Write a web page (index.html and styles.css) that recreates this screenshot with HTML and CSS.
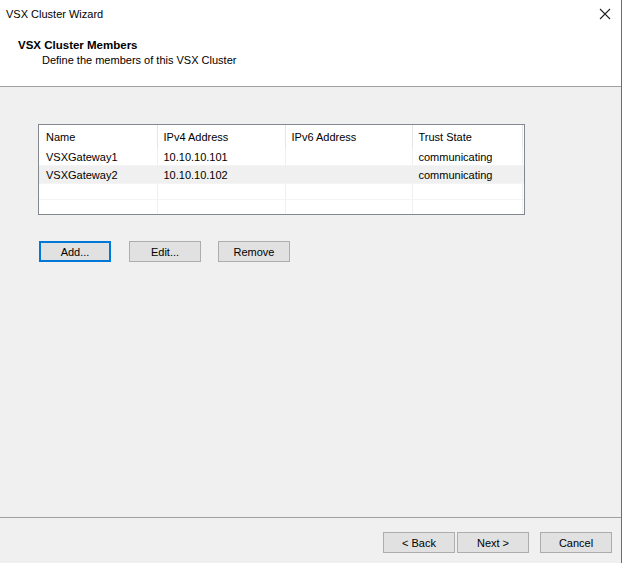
FILE: index.html
```html
<!DOCTYPE html>
<html lang="en">
<head>
    <meta charset="UTF-8">
    <title>VSX Cluster Wizard</title>
    <link rel="stylesheet" href="styles.css">
</head>
<body>
    <div class="window">
        <div class="titlebar">
            <span>VSX Cluster Wizard</span>
            <svg class="close" width="12" height="12" viewBox="0 0 12 12">
                <path d="M1 1 L11 11 M11 1 L1 11" stroke="#222" stroke-width="1.1" fill="none"/>
            </svg>
        </div>

        <div class="header">
            <h1>VSX Cluster Members</h1>
            <p>Define the members of this VSX Cluster</p>
        </div>

        <div class="content">
            <div class="list">
                <table>
                    <colgroup>
                        <col style="width: 118px">
                        <col style="width: 128px">
                        <col style="width: 127px">
                        <col style="width: 110px">
                        <col>
                    </colgroup>
                    <thead>
                        <tr>
                            <th>Name</th>
                            <th>IPv4 Address</th>
                            <th>IPv6 Address</th>
                            <th>Trust State</th>
                            <th></th>
                        </tr>
                    </thead>
                    <tbody>
                        <tr>
                            <td>VSXGateway1</td>
                            <td>10.10.10.101</td>
                            <td></td>
                            <td>communicating</td>
                            <td></td>
                        </tr>
                        <tr class="alt">
                            <td>VSXGateway2</td>
                            <td>10.10.10.102</td>
                            <td></td>
                            <td>communicating</td>
                            <td></td>
                        </tr>
                        <tr class="empty">
                            <td></td><td></td><td></td><td></td><td></td>
                        </tr>
                        <tr class="empty">
                            <td></td><td></td><td></td><td></td><td></td>
                        </tr>
                    </tbody>
                </table>
            </div>

            <div class="actions">
                <button class="btn default">Add...</button>
                <button class="btn">Edit...</button>
                <button class="btn">Remove</button>
            </div>
        </div>

        <div class="footer">
            <button class="btn">&lt; Back</button>
            <button class="btn next">Next &gt;</button>
            <button class="btn cancel">Cancel</button>
        </div>
    </div>
</body>
</html>
```

FILE: styles.css
```css
body {
    margin: 0;
    padding: 0;
    background-color: #fff;
    font-family: 'Liberation Sans', Arial, sans-serif;
    font-size: 11px;
    color: #000;
}

.window {
    width: 621px;
    height: 563px;
    border-right: 1px solid #1883d7;
    display: flex;
    flex-direction: column;
    background-color: #fff;
}

.titlebar {
    height: 28px;
    display: flex;
    align-items: center;
    justify-content: space-between;
    padding: 0 10px 0 6px;
    font-size: 11px;
}

.header {
    height: 59px;
    border-bottom: 1px solid #a0a0a0;
    padding-left: 18px;
    box-sizing: border-box;
    padding-top: 10px;
}

.header h1 {
    margin: 0;
    font-size: 11.5px;
    font-weight: bold;
    line-height: 15px;
}

.header p {
    margin: 0;
    padding-left: 24px;
    font-size: 11px;
    line-height: 15px;
}

.content {
    flex: 1;
    background-color: #f0f0f0;
    border-bottom: 1px solid #a0a0a0;
    padding: 37px 0 0 38px;
}

.list {
    width: 485px;
    height: 89px;
    border: 1px solid #828790;
    background-color: #fff;
    overflow: hidden;
}

table {
    border-collapse: collapse;
    table-layout: fixed;
    width: 485px;
}

th {
    height: 23px;
    padding: 0 0 0 6px;
    text-align: left;
    font-weight: normal;
    font-size: 11px;
    border-right: 1px solid #e5e5e5;
    vertical-align: middle;
}

th:first-child,
td:first-child {
    padding-left: 7px;
}

th:last-child {
    border-right: none;
}

td {
    height: 17px;
    padding: 0 0 0 6px;
    font-size: 11px;
    border-right: 1px solid #f0f0f0;
    border-bottom: 1px solid #f4f4f4;
    white-space: nowrap;
}

td:last-child {
    border-right: none;
}

tr.alt td {
    background-color: #f0f0f0;
}

tr.empty td {
    height: 15px;
}

.actions {
    display: flex;
    gap: 17px;
    margin-top: 26px;
    padding-left: 1px;
}

.btn {
    width: 72px;
    height: 21px;
    padding: 0;
    font-family: 'Liberation Sans', Arial, sans-serif;
    font-size: 11px;
    color: #000;
    background-color: #e1e1e1;
    border: 1px solid #adadad;
    box-sizing: border-box;
}

.btn.default {
    border: 2px solid #0078d7;
    margin-right: 1px;
}

.footer {
    height: 45px;
    box-sizing: border-box;
    background-color: #f0f0f0;
    display: flex;
    align-items: flex-start;
    padding: 14px 0 0 383px;
}

.footer .next {
    margin-left: 2px;
}

.footer .cancel {
    margin-left: 11px;
}
```
